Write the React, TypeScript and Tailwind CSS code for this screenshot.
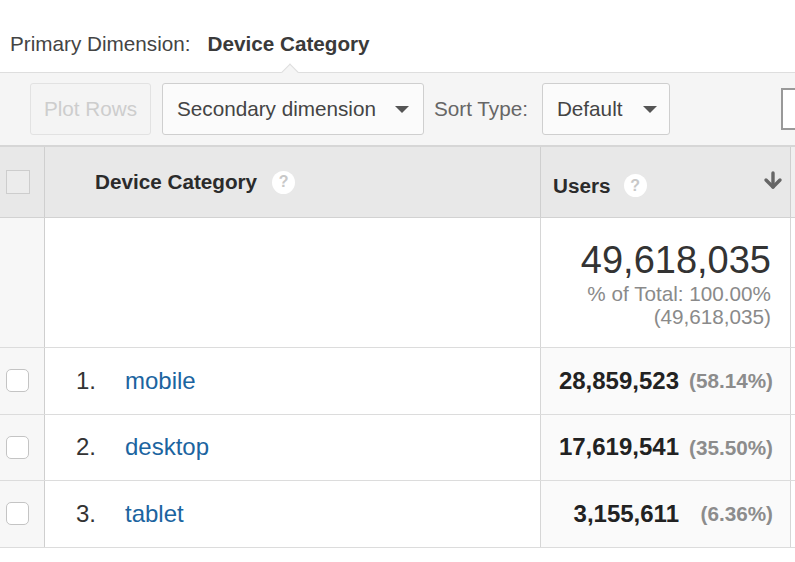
import { ArrowDown } from 'lucide-react';

const rows = [
  { n: '1.', name: 'mobile', users: '28,859,523', pct: '(58.14%)' },
  { n: '2.', name: 'desktop', users: '17,619,541', pct: '(35.50%)' },
  { n: '3.', name: 'tablet', users: '3,155,611', pct: '(6.36%)' },
];

function Help() {
  return (
    <span className="w-[23px] h-[23px] rounded-full bg-white flex items-center justify-center text-[#c8c8c8] text-[16px] font-bold leading-none">?</span>
  );
}

function Caret() {
  return <span className="w-0 h-0 border-l-[7px] border-r-[7px] border-t-[7px] border-l-transparent border-r-transparent border-t-[#555]" />;
}

export default function App() {
  return (
    <div className="w-[795px] h-[562px] bg-white overflow-hidden text-[#333] font-['Liberation_Sans',Arial,sans-serif]">
      <div className="h-[72px] pl-[10px] pt-[31px] flex gap-[17px] text-[20.7px] leading-[26px]">
        <span className="text-[#444]">Primary Dimension:</span>
        <span className="font-bold text-[#3a3a3a]">Device Category</span>
      </div>

      <div className="relative h-[73px] bg-[#f5f5f5] border-t border-[#dedede] flex items-center text-[20.7px] whitespace-nowrap">
        <div className="absolute left-[284px] -top-[7px] w-[12px] h-[12px] rotate-45 bg-[#f5f5f5] border-t border-l border-[#dedede]" />
        <div className="shrink-0 ml-[30px] w-[121px] h-[52px] border border-[#e2e2e2] rounded-[3px] bg-[#f4f4f4] text-[#cdcdcd] flex items-center justify-center">Plot Rows</div>
        <div className="shrink-0 ml-[11px] w-[262px] h-[52px] border border-[#cfcfcf] rounded-[3px] bg-[#fbfbfb] text-[#444] flex items-center pl-[14px] gap-[19px]">
          Secondary dimension <Caret />
        </div>
        <span className="shrink-0 ml-[10px] text-[#666]">Sort Type:</span>
        <div className="shrink-0 ml-[14px] w-[128px] h-[52px] border border-[#cfcfcf] rounded-[3px] bg-[#fbfbfb] text-[#444] flex items-center pl-[14px] gap-[21px]">
          Default <Caret />
        </div>
        <div className="shrink-0 ml-[111px] w-[20px] h-[42px] border-2 border-r-0 border-[#999] bg-white" />
      </div>

      <div className="border-t-2 border-[#d6d6d6]">
        <div className="flex h-[71px] bg-[#e8e8e8] border-b border-[#d2d2d2]">
          <div className="w-[45px] shrink-0 border-r border-[#cfcfcf] flex items-center pl-[6px]">
            <span className="w-[24px] h-[24px] border border-[#cdcdcd] bg-[#ececec]" />
          </div>
          <div className="w-[496px] shrink-0 border-r border-[#cfcfcf] flex items-center pl-[50px] gap-[15px]">
            <span className="font-bold text-[20.7px] text-[#2b2b2b]">Device Category</span>
            <Help />
          </div>
          <div className="w-[250px] shrink-0 border-r border-[#cfcfcf] flex items-center pl-[12px] pt-[7px]">
            <span className="font-bold text-[20.7px] text-[#2b2b2b]">Users</span>
            <span className="ml-[13px]"><Help /></span>
            <ArrowDown className="ml-auto mr-[5px] -mt-[12px] w-[24px] h-[24px] text-[#666]" strokeWidth={3.4} />
          </div>
          <div className="flex-1 bg-[#f0f0f0]" />
        </div>

        <div className="flex h-[130px] border-b border-[#dcdcdc]">
          <div className="w-[45px] shrink-0 bg-[#f7f7f7] border-r border-[#cfcfcf]" />
          <div className="w-[496px] shrink-0 border-r border-[#d6d6d6]" />
          <div className="w-[250px] shrink-0 border-r border-[#d6d6d6] flex flex-col items-end pr-[19px] pt-[20px]">
            <span className="text-[38px] leading-[44px] text-[#333]">49,618,035</span>
            <span className="text-[20.7px] leading-[23px] text-[#8a8a8a]">% of Total: 100.00%</span>
            <span className="text-[20.7px] leading-[23px] text-[#8a8a8a]">(49,618,035)</span>
          </div>
        </div>

        {rows.map(r => (
          <div key={r.n} className="flex h-[66.5px] border-b border-[#dcdcdc]">
            <div className="w-[45px] shrink-0 bg-[#f7f7f7] border-r border-[#cfcfcf] flex items-center pl-[6px]">
              <span className="w-[23px] h-[23px] rounded-[5px] border border-[#c4c4c4] bg-white" />
            </div>
            <div className="w-[496px] shrink-0 border-r border-[#d6d6d6] flex items-center text-[24px]">
              <span className="w-[80px] pl-[31px] text-[#333]">{r.n}</span>
              <span className="text-[#1b64a0]">{r.name}</span>
            </div>
            <div className="w-[250px] shrink-0 bg-[#fafafa] border-r border-[#d6d6d6] flex items-center justify-end pr-[17px]">
              <span className="font-bold text-[24px] text-[#222]">{r.users}</span>
              <span className="w-[94px] text-right font-bold text-[20.7px] text-[#8c8c8c]">{r.pct}</span>
            </div>
          </div>
        ))}
      </div>
    </div>
  );
}
